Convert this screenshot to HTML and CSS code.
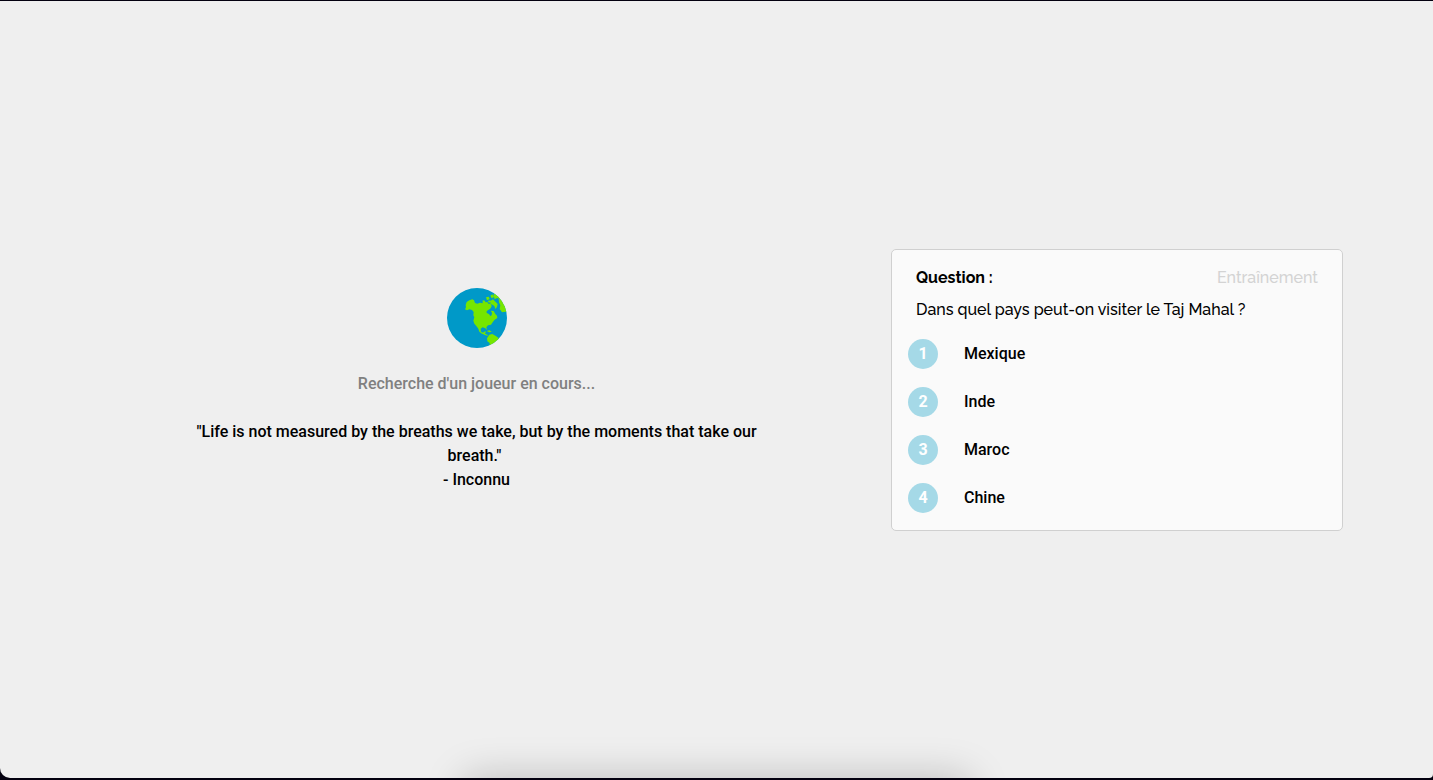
FILE: index.html
```html
<!DOCTYPE html>
<html lang="fr">
<head>
<meta charset="utf-8">
<meta name="viewport" content="width=device-width, initial-scale=1">
<title>Recherche d'un joueur</title>
<link rel="stylesheet" href="styles.css">
</head>
<body>
<main class="lobby">
  <section class="waiting">
    <svg class="globe" viewBox="0 0 180 180" aria-hidden="true">
      <defs><clipPath id="disc"><circle cx="90" cy="90" r="90"/></clipPath></defs>
      <circle cx="90" cy="90" r="90" fill="#0099c8"/>
      <g clip-path="url(#disc)" fill="#76e600">
        <path d="M54 64L57 58 56 51 59 42 67 37 76 34 81 37 84 45 91 47 99 44 107 46 107 37 114 38 115 43 121 42 124 47 131 47 134 54 131 61 124 66 119 69 119 75 126 78 130 84 134 82 135 74 131 68 140 69 145 78 150 83 151 90 143 95 138 101 132 110 123 112 118 118 120 126 115 121 107 118 101 122 102 131 108 134 112 131 117 130 114 137 121 140 124 143 116 142 105 137 97 131 94 122 88 114 82 107 79 98 82 88 79 82 80 72 75 66 67 64 60 67Z"/>
        <path d="M117 28L125 26 128 33 120 37ZM122 39L130 37 132 42 126 44ZM131 38L138 34 146 42 152 48 150 57 145 63 142 54 136 50 130 47ZM130 23L136 19 141 27 134 31ZM139 20L152 12 164 24 158 32 150 30 143 34ZM155 32L168 27 188 50 186 70 165 73 158 63 160 52 156 43Z"/>
        <path d="M119 129L127 127 134 131 127 133Z"/>
        <path d="M120 151L127 140 136 138 145 143 155 150 151 160 138 171 128 175 128 165 121 160Z"/>
      </g>
    </svg>
    <p class="status" role="status">Recherche d'un joueur en cours...</p>
    <blockquote class="quote">"Life is not measured by the breaths we take, but by the moments that take our breath."&nbsp;<br>- Inconnu</blockquote>
  </section>
  <section class="card" aria-labelledby="question-title">
    <header class="card-head">
      <h1 class="card-title" id="question-title">Question :</h1>
      <span class="mode">Entraînement</span>
    </header>
    <p class="question">Dans quel pays peut-on visiter le Taj Mahal ?</p>
    <div class="answers">
      <button class="answer" type="button"><span class="badge">1</span><span>Mexique</span></button>
      <button class="answer" type="button"><span class="badge">2</span><span>Inde</span></button>
      <button class="answer" type="button"><span class="badge">3</span><span>Maroc</span></button>
      <button class="answer" type="button"><span class="badge">4</span><span>Chine</span></button>
    </div>
  </section>
  <div class="dock-shadow"></div>
</main>
</body>
</html>
```
FILE: styles.css
```css
* { box-sizing: border-box; }
body {
  margin: 0;
  padding: 1px 0 2px;
  min-height: 100vh;
  display: flex;
  background: #03000f;
  color: #000;
  font: 500 16px/24px Roboto, "Liberation Sans", sans-serif;
}
.lobby {
  position: relative;
  overflow: hidden;
  flex: 1;
  display: flex;
  align-items: center;
  gap: 28px;
  padding: 24px 90px;
  background: #efefef;
  border-radius: 0 0 4px 10px;
}
.waiting {
  flex: 1;
  display: flex;
  flex-direction: column;
  align-items: center;
  gap: 24px;
  text-align: center;
}
.globe { width: 60px; height: 60px; }
.status { margin: 0; color: #808080; }
.quote { margin: 0; max-width: 600px; }
.card {
  flex: 0 1 452px;
  padding: 16px 0 8px;
  background: #fafafa;
  border: 1px solid #d0d0d0;
  border-radius: 5px;
}
.card-head {
  display: flex;
  justify-content: space-between;
  padding: 0 24px;
  font-family: Raleway, Lato, sans-serif;
}
.card-title { margin: 0; font-size: 16px; font-weight: 700; line-height: 24px; }
.mode { color: #d3d3d3; }
.question {
  margin: 8px 24px;
  font-family: Raleway, Lato, sans-serif;
}
.answers { display: flex; flex-direction: column; }
.answer {
  display: flex;
  align-items: center;
  gap: 26px;
  height: 48px;
  padding: 0 16px;
  border: 0;
  background: none;
  color: inherit;
  font: inherit;
  text-align: left;
  cursor: pointer;
}
.badge {
  width: 30px;
  height: 30px;
  border-radius: 50%;
  background: #a5d9e7;
  color: #fff;
  font-weight: 700;
  line-height: 30px;
  text-align: center;
}
.dock-shadow {
  position: absolute;
  top: 100%;
  left: 50%;
  width: 504px;
  height: 60px;
  transform: translateX(-50%);
  box-shadow: 0 0 40px rgba(0, 0, 0, .22);
}
```
